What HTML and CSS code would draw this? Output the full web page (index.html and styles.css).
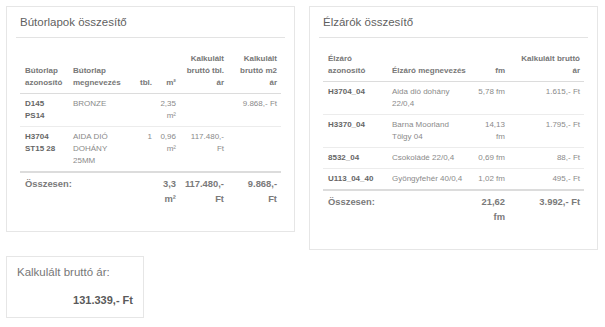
FILE: index.html
```html
<!DOCTYPE html>
<html lang="hu">
<head>
<meta charset="utf-8">
<title>Összesítő</title>
<link rel="stylesheet" href="styles.css">
</head>
<body>
<div class="page">
  <div class="row">
    <section class="card">
      <h2 class="card-title">Bútorlapok összesítő</h2>
      <table class="tbl">
        <colgroup>
          <col class="l1"><col class="l2"><col class="l3"><col class="l4"><col class="l5"><col class="l6">
        </colgroup>
        <thead>
          <tr>
            <th>Bútorlap azonosító</th>
            <th>Bútorlap megnevezés</th>
            <th class="num">tbl.</th>
            <th class="num">m²</th>
            <th class="num">Kalkulált bruttó tbl. ár</th>
            <th class="num wide">Kalkulált bruttó m2 ár</th>
          </tr>
        </thead>
        <tbody>
          <tr>
            <td class="id">D145 PS14</td>
            <td>BRONZE</td>
            <td class="num"></td>
            <td class="num">2,35 m²</td>
            <td class="num"></td>
            <td class="num wide">9.868,- Ft</td>
          </tr>
          <tr>
            <td class="id">H3704 ST15 28</td>
            <td>AIDA DIÓ DOHÁNY 25MM</td>
            <td class="num">1</td>
            <td class="num">0,96 m²</td>
            <td class="num">117.480,- Ft</td>
            <td class="num wide"></td>
          </tr>
        </tbody>
        <tfoot>
          <tr>
            <td colspan="3">Összesen:</td>
            <td class="num">3,3 m²</td>
            <td class="num">117.480,- Ft</td>
            <td class="num wide">9.868,- Ft</td>
          </tr>
        </tfoot>
      </table>
    </section>

    <section class="card">
      <h2 class="card-title">Élzárók összesítő</h2>
      <table class="tbl">
        <colgroup>
          <col class="r1"><col class="r2"><col class="r3"><col class="r4">
        </colgroup>
        <thead>
          <tr>
            <th>Élzáró azonosító</th>
            <th>Élzáró megnevezés</th>
            <th class="num">fm</th>
            <th class="num">Kalkulált bruttó ár</th>
          </tr>
        </thead>
        <tbody>
          <tr>
            <td class="id">H3704_04</td>
            <td>Aida dió dohány 22/0,4</td>
            <td class="num">5,78 fm</td>
            <td class="num">1.615,- Ft</td>
          </tr>
          <tr>
            <td class="id">H3370_04</td>
            <td>Barna Moorland Tölgy 04</td>
            <td class="num">14,13 fm</td>
            <td class="num">1.795,- Ft</td>
          </tr>
          <tr>
            <td class="id">8532_04</td>
            <td>Csokoládé 22/0,4</td>
            <td class="num">0,69 fm</td>
            <td class="num">88,- Ft</td>
          </tr>
          <tr>
            <td class="id">U113_04_40</td>
            <td>Gyöngyfehér 40/0,4</td>
            <td class="num">1,02 fm</td>
            <td class="num">495,- Ft</td>
          </tr>
        </tbody>
        <tfoot>
          <tr>
            <td colspan="2">Összesen:</td>
            <td class="num">21,62 fm</td>
            <td class="num">3.992,- Ft</td>
          </tr>
        </tfoot>
      </table>
    </section>
  </div>

  <section class="card total-card">
    <div class="total-label">Kalkulált bruttó ár:</div>
    <div class="total-value">131.339,- Ft</div>
  </section>
</div>
</body>
</html>
```

FILE: styles.css
```css
* {
  box-sizing: border-box;
}

html,
body {
  margin: 0;
  padding: 0;
  background: #ffffff;
}

body {
  font-family: "Liberation Sans", Arial, sans-serif;
  color: #888888;
}

.page {
  padding: 6px;
  display: flex;
  flex-direction: column;
  align-items: flex-start;
  gap: 6px;
}

.row {
  display: flex;
  align-items: flex-start;
  gap: 14px;
}

.card {
  width: 289px;
  background: #ffffff;
  border: 1px solid #e6e6e6;
  padding: 8px 9px 21px;
}

.card-title {
  margin: 0;
  padding: 0 4px 8px;
  font-size: 11.5px;
  line-height: 14px;
  font-weight: 400;
  color: #5f5f5f;
  border-bottom: 1px solid #e3e3e3;
}

.tbl {
  width: calc(100% - 8px);
  margin: 11px 4px 0;
  border-collapse: collapse;
  table-layout: fixed;
  font-size: 8px;
  line-height: 12px;
}

.l1 { width: 48px; }
.l2 { width: 66px; }
.l3 { width: 22px; }
.l4 { width: 24px; }
.l5 { width: 48px; }
.l6 { width: 53px; }

.r1 { width: 64px; }
.r2 { width: 85px; }
.r3 { width: 37px; }
.r4 { width: 75px; }

.tbl th,
.tbl td {
  padding: 4px 4px 4px 5px;
  text-align: left;
}

.tbl th {
  vertical-align: bottom;
  font-weight: 700;
  color: #777777;
  border-bottom: 1px solid #dcdcdc;
}

.tbl tbody td {
  vertical-align: top;
  color: #8a8a8a;
  border-bottom: 1px solid #ececec;
}

.tbl .num {
  text-align: right;
  padding-left: 4px;
}

.tbl .wide {
  padding-left: 9px;
}

.tbl tbody td.id {
  font-weight: 700;
  color: #666666;
}

.tbl tfoot td {
  vertical-align: top;
  font-size: 9.4px;
  line-height: 15px;
  font-weight: 700;
  color: #7a7a7a;
  padding-top: 3px;
  border-top: 2px solid #dcdcdc;
}

.total-card {
  width: 138px;
  padding: 8px 10px 10px;
}

.total-label {
  font-size: 11.5px;
  line-height: 14px;
  color: #777777;
}

.total-value {
  margin-top: 14px;
  text-align: right;
  font-size: 11px;
  line-height: 14px;
  font-weight: 700;
  color: #5a5a5a;
}
```
